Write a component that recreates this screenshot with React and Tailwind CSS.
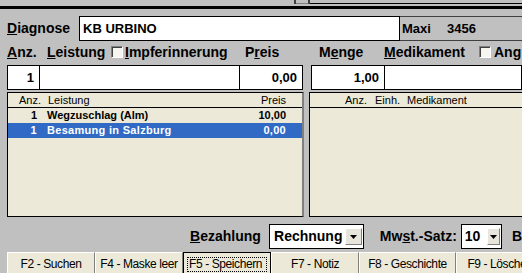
import React from 'react';

const raised = 'border border-t-white border-l-white border-r-[#808080] border-b-[#808080]';

function Check() {
    return <span className="inline-block w-[12px] h-[12px] border border-t-[#808080] border-l-[#808080] border-r-white border-b-white bg-[#f6f5ef] shadow-[inset_1px_1px_0_#404040]" />;
}

function Arrow({ className = '' }) {
    return (
        <span className={`flex items-center justify-center bg-[#e8e6dc] ${raised} ${className}`}>
            <svg width="7" height="4" viewBox="0 0 7 4"><path d="M0 0h7L3.5 4z" fill="#000" /></svg>
        </span>
    );
}

function Box({ className = '', children }) {
    return (
        <div className={`h-[25px] bg-white border border-black flex items-center justify-end pr-[5px] text-[13px] font-bold ${className}`}>
            {children}
        </div>
    );
}

function FButton({ label, w, focused }) {
    return (
        <div className={`h-[24px] shrink-0 bg-[#ece9d8] flex items-center justify-center text-[12px] tracking-[-0.4px] whitespace-nowrap overflow-hidden ${focused ? 'border border-black' : raised} ${w}`}>
            {focused ? (
                <span className="border border-dotted border-black px-[1px] leading-[13px] w-[80px] overflow-hidden whitespace-nowrap">{label}</span>
            ) : (
                label
            )}
        </div>
    );
}

export default function App() {
    return (
        <div className="w-[522px] h-[273px] overflow-hidden bg-[#c0c0c0] text-black font-['Liberation_Sans',Arial,sans-serif]">
            {/* top strip */}
            <div className="h-[6px] flex">
                <div className="w-[294px]" />
                <div className="w-[2px] h-[4px] bg-[#404040]" />
                <div className="w-[12px] h-[4px] border-b border-[#808080]" />
                <div className="w-[2px] h-[4px] bg-[#404040]" />
                <div className="flex-1 h-[4px] border-b-[1px] border-black" />
            </div>
            <div className="h-[3px] bg-black" />

            {/* Diagnose row */}
            <div className="flex mt-[7px] h-[25px] pl-[7px]">
                <div className="w-[72px] flex items-center text-[14px] font-bold">
                    <span className="underline">D</span>iagnose
                </div>
                <div className="w-[321px] bg-white border border-black flex items-center pl-[3px] text-[13px] font-bold">
                    KB URBINO
                </div>
                <div className="flex-1 border-y border-[#404040] flex items-center pl-[2px] text-[13px] font-bold">
                    <span className="w-[45px]">Maxi</span>
                    <span>3456</span>
                </div>
            </div>

            {/* labels */}
            <div className="flex items-center mt-[3px] h-[16px] pl-[7px] text-[14px] font-bold whitespace-nowrap">
                <span className="w-[40px]"><span className="underline">A</span>nz.</span>
                <span className="w-[64px]"><span className="underline">L</span>eistung</span>
                <span className="w-[14px] flex"><Check /></span>
                <span className="w-[120px]"><span className="underline">I</span>mpferinnerung</span>
                <span className="w-[74px]">P<span className="underline">r</span>eis</span>
                <span className="w-[65px]">M<span className="underline">e</span>nge</span>
                <span className="w-[95px]"><span className="underline">M</span>edikament</span>
                <span className="w-[15px] flex"><Check /></span>
                <span>Ang</span>
            </div>

            {/* input row */}
            <div className="flex mt-[5px] pl-[7px]">
                <Box className="w-[33px]">1</Box>
                <Box className="w-[201px] -ml-px" />
                <Box className="w-[64px] -ml-px">0,00</Box>
                <div className="w-[8px]" />
                <Box className="w-[74px]">1,00</Box>
                <Box className="flex-1 -ml-px" />
            </div>

            {/* lists */}
            <div className="flex mt-[2px] pl-[7px] h-[125px]">
                <div className="w-[297px] bg-[#ece9d8] border-l border-t border-b border-black border-r-2 border-r-[#808080] text-[11px]">
                    <div className="flex h-[15px] items-center border-b border-black">
                        <span className="w-[33px] text-right">Anz.</span>
                        <span className="ml-[7px] flex-1">Leistung</span>
                        <span className="pr-[16px]">Preis</span>
                    </div>
                    <div className="flex h-[15px] items-center font-bold text-[11px]">
                        <span className="w-[29px] text-right">1</span>
                        <span className="ml-[10px] flex-1">Wegzuschlag (Alm)</span>
                        <span className="pr-[16px]">10,00</span>
                    </div>
                    <div className="flex h-[15px] items-center font-bold text-[11px] bg-[#316ac5] text-white tracking-[0.3px]">
                        <span className="w-[29px] text-right">1</span>
                        <span className="ml-[10px] flex-1">Besamung in Salzburg</span>
                        <span className="pr-[16px]">0,00</span>
                    </div>
                </div>
                <div className="w-[5px] bg-[#c0c0c0]" />
                <div className="flex-1 bg-[#ece9d8] border-l border-t border-b border-black text-[11px]">
                    <div className="flex h-[15px] items-center border-b border-black">
                        <span className="ml-[35px] w-[30px]">Anz.</span>
                        <span className="w-[32px]">Einh.</span>
                        <span>Medikament</span>
                    </div>
                </div>
            </div>

            {/* Bezahlung row */}
            <div className="flex items-center mt-[7px] h-[25px] whitespace-nowrap text-[14px] font-bold">
                <span className="ml-[190px] w-[81px]"><span className="underline">B</span>ezahlung</span>
                <div className="w-[97px] h-[25px] bg-white border border-black flex items-center pl-[4px]">
                    <span className="flex-1">Rechnung</span>
                    <Arrow className="w-[17px] h-[17px] mr-[1px]" />
                </div>
                <span className="ml-[16px] w-[83px]">Mw<span className="underline">s</span>t.-Satz:</span>
                <div className="w-[42px] h-[25px] bg-white border border-black flex items-center pl-[3px]">
                    <span className="flex-1">10</span>
                    <Arrow className="w-[13px] h-[17px] mr-[1px]" />
                </div>
                <span className="ml-[10px]">B</span>
            </div>

            {/* function keys */}
            <div className="flex mt-[3px] pl-[7px]">
                <FButton label="F2 - Suchen" w="w-[88px]" />
                <FButton label="F4 - Maske leer" w="w-[88px]" />
                <FButton label="F5 - Speichern" w="w-[88px]" focused />
                <FButton label="F7 - Notiz" w="w-[88px]" />
                <FButton label="F8 - Geschichte" w="w-[97px]" />
                <FButton label="F9 - Löschen" w="w-[88px]" />
            </div>
        </div>
    );
}
